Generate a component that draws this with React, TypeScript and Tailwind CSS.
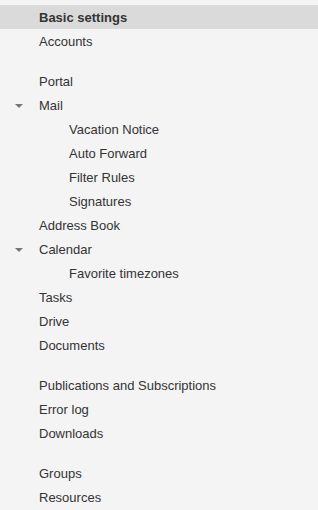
import React from 'react';

type Item = { label: string; level?: number; open?: boolean; active?: boolean; gap?: boolean };

const ITEMS: Item[] = [
  { label: 'Basic settings', active: true },
  { label: 'Accounts' },
  { label: 'Portal', gap: true },
  { label: 'Mail', open: true },
  { label: 'Vacation Notice', level: 1 },
  { label: 'Auto Forward', level: 1 },
  { label: 'Filter Rules', level: 1 },
  { label: 'Signatures', level: 1 },
  { label: 'Address Book' },
  { label: 'Calendar', open: true },
  { label: 'Favorite timezones', level: 1 },
  { label: 'Tasks' },
  { label: 'Drive' },
  { label: 'Documents' },
  { label: 'Publications and Subscriptions', gap: true },
  { label: 'Error log' },
  { label: 'Downloads' },
  { label: 'Groups', gap: true },
  { label: 'Resources' },
];

export default function App() {
  return (
    <div
      className="w-[318px] h-[510px] bg-[#f4f4f4] pt-[5px] overflow-hidden text-[13px] text-[#333]"
      style={{ fontFamily: '"Liberation Sans", Arial, sans-serif' }}
    >
      <ul>
        {ITEMS.map((it) => (
          <li key={it.label} className={it.gap ? 'mt-4' : ''}>
            <div
              className={`relative h-6 flex items-center pt-[2px] ${it.level ? 'pl-[69px]' : 'pl-[39px]'} ${
                it.active ? 'bg-[#dadada] font-bold' : ''
              }`}
            >
              {it.open && (
                <span className="absolute left-[15px] top-[11px] w-0 h-0 border-l-[4px] border-r-[4px] border-t-[4px] border-l-transparent border-r-transparent border-t-[#777]" />
              )}
              {it.label}
            </div>
          </li>
        ))}
      </ul>
    </div>
  );
}
